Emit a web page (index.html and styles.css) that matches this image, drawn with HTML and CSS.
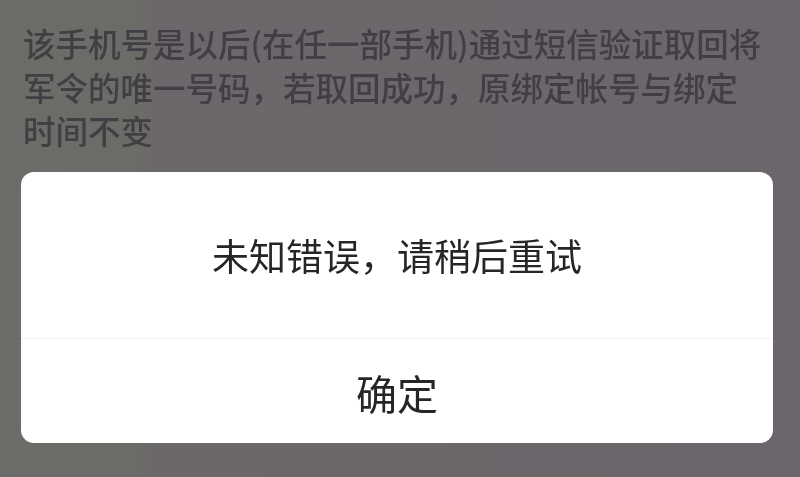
FILE: index.html
```html
<!DOCTYPE html>
<html lang="zh-CN">
<head>
<meta charset="utf-8">
<title>提示</title>
<link rel="stylesheet" href="styles.css">
</head>
<body>
<div class="screen">
  <p class="hint">该手机号是以后(在任一部手机)通过短信验证取回将<br>军令的唯一号码，若取回成功，原绑定帐号与绑定<br>时间不变</p>
  <div class="dialog">
    <div class="message">未知错误，请稍后重试</div>
    <div class="actions"><span class="btn">确定</span></div>
  </div>
</div>
</body>
</html>
```

FILE: styles.css
```css
html, body {
  margin: 0;
  padding: 0;
}

body {
  width: 800px;
  height: 477px;
  overflow: hidden;
  font-family: "Noto Sans CJK SC", "Noto Sans", sans-serif;
  background: linear-gradient(90deg, #6c6c68 0px, #6c6b68 140px, #6b676a 158px, #6a666b 100%);
}

.screen {
  display: flex;
  flex-direction: column;
  padding-top: 21px;
}

.hint {
  margin: 0;
  padding-left: 23px;
  font-size: 32.5px;
  font-weight: 500;
  line-height: 43.5px;
  color: #423f44;
  white-space: nowrap;
  filter: blur(0.6px);
}

.dialog {
  margin: 20px 27px 0 21px;
  background: #ffffff;
  border-radius: 13px;
  display: flex;
  flex-direction: column;
  overflow: hidden;
}

.message {
  height: 166px;
  display: flex;
  align-items: center;
  justify-content: center;
  font-size: 37px;
  color: #262626;
  filter: blur(0.4px);
}

.actions {
  height: 105px;
  border-top: 1px solid #f1f1f1;
  display: flex;
  align-items: center;
  justify-content: center;
  padding-top: 2px;
  box-sizing: border-box;
}

.btn {
  font-size: 41px;
  color: #262626;
  filter: blur(0.4px);
}
```
